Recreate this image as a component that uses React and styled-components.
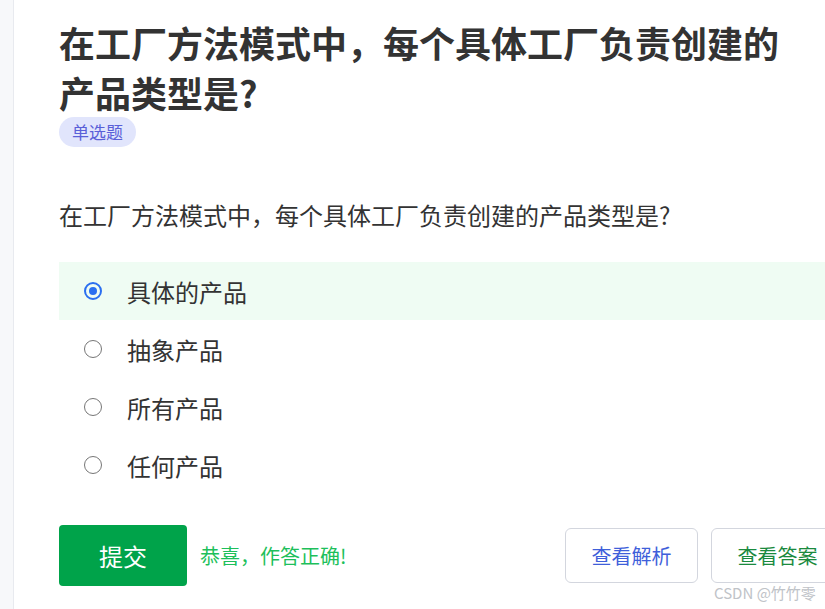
import React from 'react'
import styled, { createGlobalStyle } from 'styled-components'

const Global = createGlobalStyle`
  html, body {
    margin: 0;
    padding: 0;
    background: #fff;
    overflow: hidden;
  }
  body {
    font-family: "Noto Sans CJK SC", "Noto Sans", sans-serif;
    color: #333;
  }
`

const Page = styled.div`
  display: flex;
  width: 825px;
  height: 609px;
  overflow: hidden;
`

const Rail = styled.div`
  flex: 0 0 13px;
  background: #f7f8fa;
  border-right: 1px solid #e8eaef;
`

const Main = styled.main`
  flex: 0 0 785px;
  padding: 17px 0 0 45px;
  display: flex;
  flex-direction: column;
`

const Title = styled.h1`
  margin: 0;
  font-size: 36px;
  line-height: 50px;
  font-weight: 700;
  color: #333;
  width: 740px;
`

const Tag = styled.span`
  align-self: flex-start;
  height: 30px;
  padding: 0 13px;
  border-radius: 15px;
  background: #e1e5fc;
  color: #5a5fd8;
  font-size: 17px;
  line-height: 30px;
`

const Question = styled.p`
  margin: 50px 0 29px;
  font-size: 24px;
  line-height: 36px;
  color: #333;
`

const Options = styled.ul`
  list-style: none;
  margin: 0;
  padding: 0;
  display: flex;
  flex-direction: column;
`

const Option = styled.li`
  display: flex;
  align-items: center;
  height: 58px;
  padding-left: 25px;
  background: ${p => (p.$active ? '#effcf3' : 'transparent')};
  font-size: 24px;
  color: #333;
`

const Radio = styled.span`
  flex: 0 0 auto;
  box-sizing: border-box;
  width: 18px;
  height: 18px;
  border-radius: 50%;
  margin-right: 25px;
  border: ${p => (p.$checked ? '2px solid #2b6ff0' : '1px solid #767676')};
  display: flex;
  align-items: center;
  justify-content: center;
  &::after {
    content: '';
    display: ${p => (p.$checked ? 'block' : 'none')};
    width: 8px;
    height: 8px;
    border-radius: 50%;
    background: #2b6ff0;
  }
`

const Actions = styled.div`
  display: flex;
  align-items: center;
  margin-top: 31px;
`

const Submit = styled.button`
  width: 128px;
  height: 61px;
  border: none;
  border-radius: 4px;
  background: #00a34a;
  color: #fff;
  font-family: inherit;
  font-size: 24px;
`

const Success = styled.span`
  margin-left: 13px;
  font-size: 20px;
  color: #1dbf5b;
`

const Right = styled.div`
  margin-left: auto;
  display: flex;
  gap: 13px;
  position: relative;
`

const Ghost = styled.button`
  width: 133px;
  height: 55px;
  background: #fff;
  border: 1px solid #d3d6de;
  border-radius: 6px;
  font-family: inherit;
  font-size: 20px;
  color: ${p => p.$tone};
`

const Mark = styled.span`
  position: absolute;
  left: 149px;
  top: 54px;
  font-size: 15px;
  color: #c0c3c8;
  white-space: nowrap;
`

const options = ['具体的产品', '抽象产品', '所有产品', '任何产品']

export default function App() {
  return (
    <Page>
      <Global />
      <Rail />
      <Main>
        <Title>在工厂方法模式中，每个具体工厂负责创建的产品类型是?</Title>
        <Tag>单选题</Tag>
        <Question>在工厂方法模式中，每个具体工厂负责创建的产品类型是?</Question>
        <Options>
          {options.map((o, i) => (
            <Option key={o} $active={i === 0}>
              <Radio $checked={i === 0} />
              {o}
            </Option>
          ))}
        </Options>
        <Actions>
          <Submit>提交</Submit>
          <Success>恭喜，作答正确!</Success>
          <Right>
            <Ghost $tone="#3f5fda">查看解析</Ghost>
            <Ghost $tone="#1a8a3e">查看答案</Ghost>
            <Mark>CSDN @竹竹零</Mark>
          </Right>
        </Actions>
      </Main>
    </Page>
  )
}
